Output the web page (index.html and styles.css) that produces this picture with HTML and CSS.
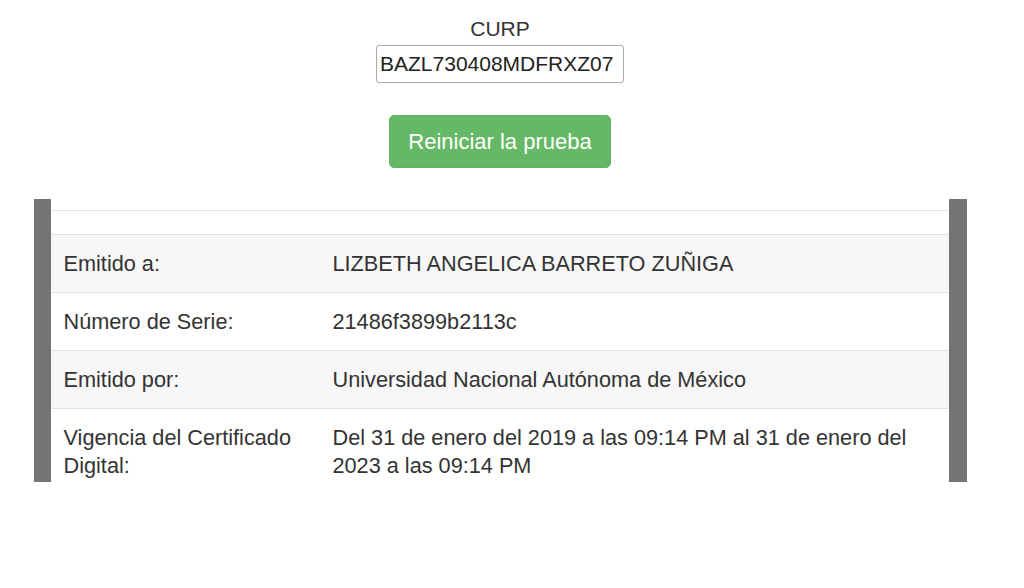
FILE: index.html
```html
<!DOCTYPE html>
<html lang="es">
<head>
<meta charset="utf-8">
<title>Validación de certificado</title>
<link rel="stylesheet" href="styles.css">
</head>
<body>
<div class="page">
  <div class="curp-label">CURP</div>
  <input class="curp-input" type="text" value="BAZL730408MDFRXZ07" readonly>
  <button class="btn-reset" type="button">Reiniciar la prueba</button>
  <div class="viewer">
    <div class="cert">
      <div class="filler filler-a"></div>
      <div class="filler filler-b"></div>
      <div class="row striped">
        <div class="label">Emitido a:</div>
        <div class="value">LIZBETH ANGELICA BARRETO ZUÑIGA</div>
      </div>
      <div class="row">
        <div class="label">Número de Serie:</div>
        <div class="value">21486f3899b2113c</div>
      </div>
      <div class="row striped">
        <div class="label">Emitido por:</div>
        <div class="value">Universidad Nacional Autónoma de México</div>
      </div>
      <div class="row">
        <div class="label">Vigencia del Certificado Digital:</div>
        <div class="value">Del 31 de enero del 2019 a las 09:14 PM al 31 de enero del 2023 a las 09:14 PM</div>
      </div>
    </div>
  </div>
</div>
</body>
</html>
```
FILE: styles.css
```css
html, body {
  margin: 0;
  padding: 0;
  background: #fff;
}
body {
  font-family: "Liberation Sans", Arial, Helvetica, sans-serif;
  color: #333;
}
.page {
  width: 1000px;
  display: flex;
  flex-direction: column;
  align-items: center;
}
.curp-label {
  margin-top: 17px;
  font-size: 21px;
  line-height: 24px;
  color: #333;
}
.curp-input {
  margin-top: 4px;
  width: 248px;
  height: 38px;
  box-sizing: border-box;
  border: 1px solid #a9a9a9;
  border-radius: 3px;
  padding: 1px 3px;
  font-family: "Liberation Sans", Arial, sans-serif;
  font-size: 21px;
  color: #222;
  background: #fff;
  outline: none;
}
.btn-reset {
  margin-top: 32px;
  width: 222px;
  height: 53px;
  box-sizing: border-box;
  background: #65b865;
  border: 1px solid #5eb35e;
  border-radius: 5px;
  color: #fff;
  font-family: "Liberation Sans", Arial, sans-serif;
  font-size: 22px;
  padding: 0;
}
.viewer {
  margin-top: 31px;
  width: 933px;
  height: 283px;
  box-sizing: border-box;
  border-left: 17px solid #747474;
  border-right: 18px solid #747474;
  overflow: hidden;
}
.cert {
  display: flex;
  flex-direction: column;
}
.filler {
  border-bottom: 1px solid #e3e3e3;
  background: #fff;
}
.filler-a { height: 11px; }
.filler-b { height: 23px; }
.row {
  display: grid;
  grid-template-columns: 269px 1fr;
  border-bottom: 1px solid #e0e0e0;
  background: #fff;
  font-size: 21.7px;
  line-height: 28px;
}
.row.striped {
  background: #f7f7f7;
}
.label, .value {
  padding: 15px 13px 14px;
}
```
